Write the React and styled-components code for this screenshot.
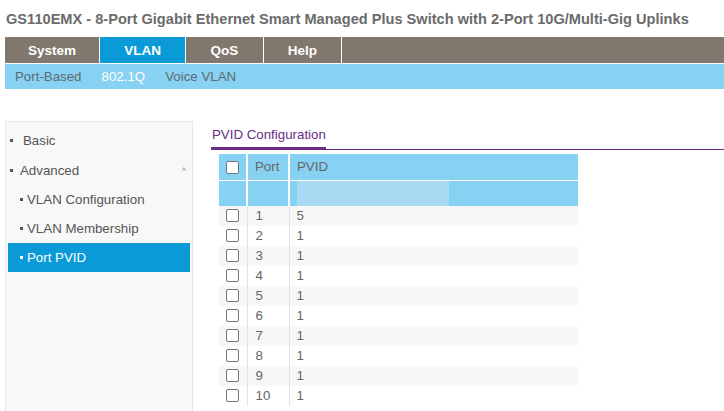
import React from "react";
import styled, { createGlobalStyle } from "styled-components";

const GlobalStyle = createGlobalStyle`
  html, body {
    margin: 0;
    padding: 0;
    background: #fff;
    font-family: "Liberation Sans", Arial, sans-serif;
    overflow: hidden;
  }
`;

const Page = styled.div`
  width: 724px;
  height: 411px;
  overflow: hidden;
`;

const Title = styled.h1`
  margin: 0;
  height: 37px;
  padding-left: 6px;
  font-size: 14.6px;
  font-weight: bold;
  line-height: 38px;
  color: #6b6b6b;
  white-space: nowrap;
`;

const TopNav = styled.div`
  display: flex;
  margin-left: 5px;
  height: 26px;
  background: #80776d;
  border-bottom: 1px solid #fff;
`;

const Tab = styled.div`
  width: ${(p) => p.$w}px;
  box-sizing: border-box;
  display: flex;
  align-items: center;
  justify-content: center;
  border-right: 1.5px solid #fff;
  background: ${(p) => (p.$active ? "#0a9ad8" : "transparent")};
  color: #fff;
  font-size: 13.5px;
  font-weight: bold;
`;

const SubNav = styled.div`
  display: flex;
  align-items: center;
  gap: 20px;
  margin-left: 5px;
  height: 25px;
  padding-left: 10px;
  background: #87d1f2;
`;

const SubItem = styled.span`
  font-size: 13.3px;
  color: ${(p) => (p.$active ? "#fff" : "#5f6b72")};
`;

const Main = styled.div`
  display: flex;
  margin-top: 32px;
  margin-left: 5px;
`;

const Sidebar = styled.div`
  width: 188px;
  height: 300px;
  box-sizing: border-box;
  padding: 3px 2px 0 2px;
  background: #f8f8f8;
  border: 1px solid #e6e6e6;
  border-bottom: none;
`;

const MenuItem = styled.div`
  position: relative;
  display: flex;
  align-items: center;
  height: ${(p) => p.$h || 29}px;
  padding-left: ${(p) => p.$indent}px;
  background: ${(p) => (p.$active ? "#0a9ad8" : "transparent")};
  color: ${(p) => (p.$active ? "#fff" : "#555")};
  font-size: 13.3px;
  white-space: nowrap;
`;

const Bullet = styled.span`
  width: 3px;
  height: 3px;
  margin-right: ${(p) => p.$gap}px;
  background: currentColor;
  flex-shrink: 0;
`;

const Caret = styled.span`
  position: absolute;
  right: 4px;
  top: 10px;
  font-size: 9px;
  color: #888;
`;

const Content = styled.div`
  flex: 1;
  padding-left: 18px;
`;

const TabStrip = styled.div`
  display: flex;
  border-bottom: 1px solid #6a2c86;
`;

const SectionTab = styled.div`
  padding: 6px 0 5px 1px;
  width: 114px;
  white-space: nowrap;
  font-size: 13.3px;
  color: #6a2c86;
  border-bottom: 3px solid #6a2c86;
  margin-bottom: -1px;
`;

const Table = styled.table`
  margin: 4px 0 0 8px;
  width: 359px;
  border-collapse: collapse;
  font-size: 13.3px;
  color: #666;
`;

const HeadCell = styled.th`
  height: ${(p) => p.$h}px;
  padding: 0 0 0 ${(p) => p.$pl || 0}px;
  background: #87d1f2;
  border-right: ${(p) => (p.$last ? "none" : "2px solid #fff")};
  border-bottom: ${(p) => (p.$top ? "1px solid #fff" : "none")};
  text-align: left;
  font-weight: normal;
  color: #666;
  width: ${(p) => (p.$w ? `${p.$w}px` : "auto")};
  box-sizing: border-box;
`;

const Row = styled.tr`
  background: ${(p) => (p.$odd ? "#f7f7f7" : "#fff")};
`;

const Cell = styled.td`
  height: 20px;
  padding: 0 0 0 ${(p) => p.$pl || 0}px;
  border-right: ${(p) => (p.$last ? "none" : "1px solid #e3e3e3")};
  line-height: 20px;
`;

const Check = styled.span`
  display: inline-block;
  width: 13px;
  height: 13px;
  box-sizing: border-box;
  border: 1px solid #777;
  border-radius: 2px;
  background: #fff;
  vertical-align: middle;
  margin-left: 7px;
`;

const FilterInput = styled.div`
  width: 152px;
  height: 25px;
  background: #a8daf3;
`;

const tabs = [
  { label: "System", w: 95 },
  { label: "VLAN", w: 86, active: true },
  { label: "QoS", w: 78 },
  { label: "Help", w: 78 },
];

const pvids = [5, 1, 1, 1, 1, 1, 1, 1, 1, 1];

export default function App() {
  return (
    <Page>
      <GlobalStyle />
      <Title>
        GS110EMX - 8-Port Gigabit Ethernet Smart Managed Plus Switch with 2-Port 10G/Multi-Gig Uplinks
      </Title>
      <TopNav>
        {tabs.map((t) => (
          <Tab key={t.label} $w={t.w} $active={t.active}>
            {t.label}
          </Tab>
        ))}
      </TopNav>
      <SubNav>
        <SubItem>Port-Based</SubItem>
        <SubItem $active>802.1Q</SubItem>
        <SubItem>Voice VLAN</SubItem>
      </SubNav>
      <Main>
        <Sidebar>
          <MenuItem $indent={2} $h={31}>
            <Bullet $gap={10} />
            Basic
          </MenuItem>
          <MenuItem $indent={2}>
            <Bullet $gap={7} />
            Advanced
            <Caret>^</Caret>
          </MenuItem>
          <MenuItem $indent={12}>
            <Bullet $gap={4} />
            VLAN Configuration
          </MenuItem>
          <MenuItem $indent={12}>
            <Bullet $gap={4} />
            VLAN Membership
          </MenuItem>
          <MenuItem $indent={12} $active>
            <Bullet $gap={4} />
            Port PVID
          </MenuItem>
        </Sidebar>
        <Content>
          <TabStrip>
            <SectionTab>PVID Configuration</SectionTab>
          </TabStrip>
          <Table>
            <thead>
              <tr>
                <HeadCell $h={26} $w={28} $top>
                  <Check />
                </HeadCell>
                <HeadCell $h={26} $w={42} $pl={7} $top>
                  Port
                </HeadCell>
                <HeadCell $h={26} $pl={7} $top $last>
                  PVID
                </HeadCell>
              </tr>
              <tr>
                <HeadCell $h={25} />
                <HeadCell $h={25} />
                <HeadCell $h={25} $pl={7} $last>
                  <FilterInput />
                </HeadCell>
              </tr>
            </thead>
            <tbody>
              {pvids.map((v, i) => (
                <Row key={i} $odd={i % 2 === 0}>
                  <Cell>
                    <Check />
                  </Cell>
                  <Cell $pl={8}>{i + 1}</Cell>
                  <Cell $pl={7} $last>
                    {v}
                  </Cell>
                </Row>
              ))}
            </tbody>
          </Table>
        </Content>
      </Main>
    </Page>
  );
}
